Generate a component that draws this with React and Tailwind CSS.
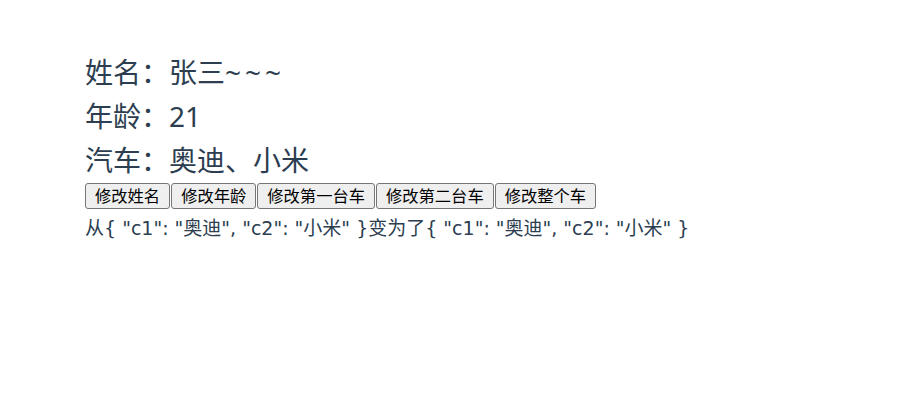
import React from "react";

const font = "font-['Segoe_UI','Noto_Sans','Noto_Sans_CJK_SC',sans-serif]";
const wide = "font-['DejaVu_Sans','Noto_Sans_CJK_SC',sans-serif]";

const buttons = ["修改姓名", "修改年龄", "修改第一台车", "修改第二台车", "修改整个车"];

const App = () => {
  return (
    <div className={`w-[898px] h-[410px] bg-white pl-[85px] pt-[50px] text-[#2c3e50] ${font}`}>
      <div className="text-[28px] leading-[44px]">
        姓名：张三<span className="tracking-[4px]">~~~</span>
      </div>
      <div className="text-[28px] leading-[44px]">年龄：21</div>
      <div className="text-[28px] leading-[44px]">汽车：奥迪、小米</div>
      <div className="flex flex-row mt-px">
        {buttons.map((b) => (
          <button
            key={b}
            className="h-[26px] px-[9px] mr-px bg-[#efefef] border border-[#767676] rounded-[3px] text-[16.3px] leading-none text-black"
          >
            {b}
          </button>
        ))}
      </div>
      <div className={`text-[19px] leading-[40px] -mt-[1px] ${wide}`}>
        从{'{ "c1": "奥迪", "c2": "小米" }'}变为了{'{ "c1": "奥迪", "c2": "小米" }'}
      </div>
    </div>
  );
};

export default App;
